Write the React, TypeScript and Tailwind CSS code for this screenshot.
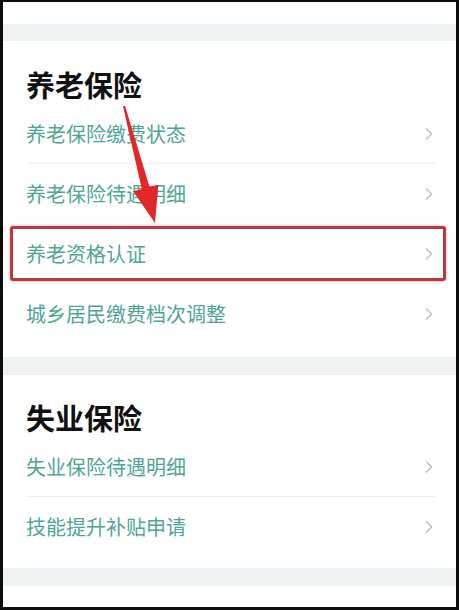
import React from 'react';

const FONT = { fontFamily: '"Noto Sans CJK SC", "Noto Sans", sans-serif' };

const Chevron = () => (
  <svg width="9" height="14" viewBox="0 0 9 14" className="shrink-0">
    <polyline points="1.5,2 6.5,7 1.5,12" fill="none" stroke="#c4c4c4" strokeWidth="1.7" strokeLinejoin="round" strokeLinecap="round" />
  </svg>
);

interface RowProps {
  label: string;
  divider?: boolean;
  highlight?: boolean;
}

const Row: React.FC<RowProps> = ({ label, divider, highlight }) => (
  <div className={`relative flex h-[60px] items-center justify-between pr-[2px] ${divider ? 'border-b border-[#ececec]' : ''}`}>
    <span className="text-[20px] leading-none text-[#4ea595]">{label}</span>
    <Chevron />
    {highlight && (
      <div className="pointer-events-none absolute -left-[16px] -right-[10px] top-[2px] bottom-[3px] rounded-[3px] border-[3px] border-[#bd383b] shadow-[0_0_3px_rgba(220,60,60,0.5)]" />
    )}
  </div>
);

const Band = () => <div className="h-[17px] bg-[#eef2f1]" />;

export default function App() {
  return (
    <div className="relative h-[610px] w-[459px] bg-[#0c0c0c] pl-[3px] pr-[3px] pt-[2px] pb-[3px]" style={FONT}>
      <div className="flex h-full flex-col bg-white">
        <div className="h-[22px]" />
        <Band />
        <section className="pl-[23px] pr-[20px] pt-[23px] pb-[13px]">
          <h2 className="flex h-[40px] items-center text-[29px] font-bold leading-none text-[#111]">养老保险</h2>
          <Row label="养老保险缴费状态" divider />
          <Row label="养老保险待遇明细" />
          <Row label="养老资格认证" highlight />
          <Row label="城乡居民缴费档次调整" />
        </section>
        <div className="h-[18px] bg-[#eef2f1]" />
        <section className="pl-[23px] pr-[20px] pt-[22px] pb-[11px]">
          <h2 className="flex h-[40px] items-center text-[29px] font-bold leading-none text-[#111]">失业保险</h2>
          <Row label="失业保险待遇明细" divider />
          <Row label="技能提升补贴申请" />
        </section>
        <div className="h-[18px] bg-[#eef2f1]" />
        <div className="flex-1" />
      </div>
      <svg className="pointer-events-none absolute left-0 top-0" width="459" height="610" viewBox="0 0 459 610">
        <polygon
          points="123,106.3 125,105.7 149.6,187 158.3,184.7 155,223 133.1,191.3 141.8,189"
          fill="#e3262a"
        />
      </svg>
    </div>
  );
}
